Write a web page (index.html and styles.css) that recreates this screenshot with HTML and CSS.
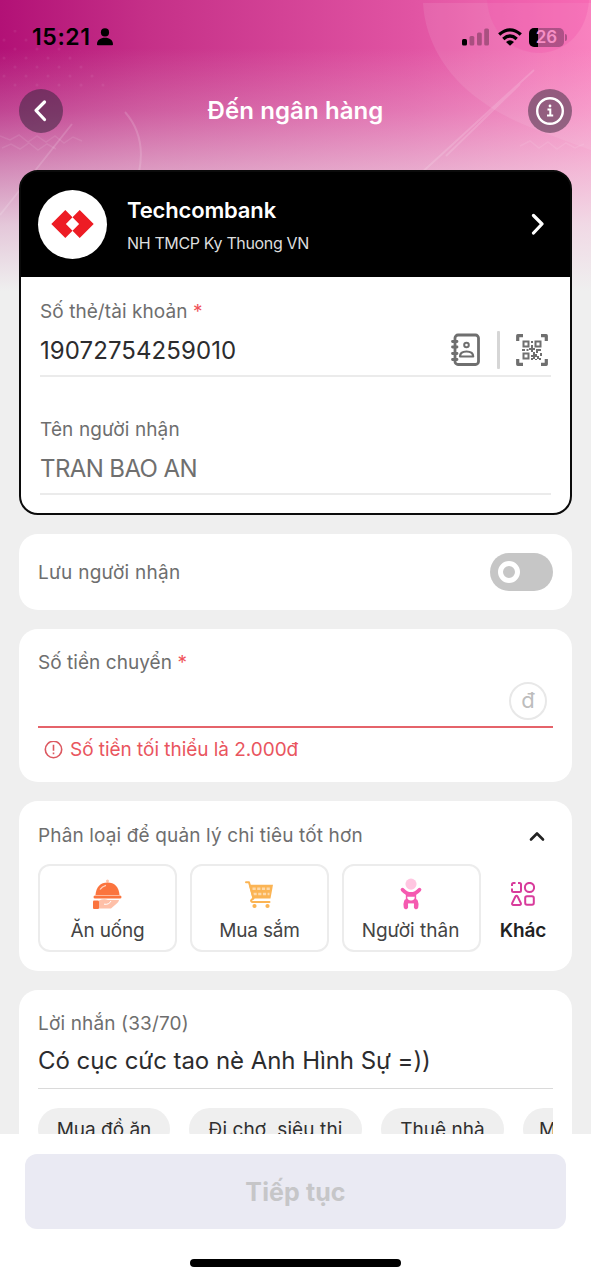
FILE: index.html
```html
<!DOCTYPE html>
<html lang="vi">
<head>
<meta charset="utf-8">
<title>Đến ngân hàng</title>
<link rel="stylesheet" href="styles.css">
</head>
<body>
<div class="screen">
  <svg class="backdrop" viewBox="0 0 591 300" aria-hidden="true">
    <defs>
      <linearGradient id="hue" x1="0" y1="0" x2="1" y2="0">
        <stop offset="0" stop-color="#b21176"/><stop offset=".25" stop-color="#c53088"/><stop offset=".7" stop-color="#e154a3"/><stop offset="1" stop-color="#f976b9"/>
      </linearGradient>
      <linearGradient id="fade" x1="0" y1="0" x2="0" y2="1">
        <stop offset=".16" stop-color="#efefef" stop-opacity="0"/><stop offset=".37" stop-color="#efefef" stop-opacity=".24"/><stop offset=".55" stop-color="#efefef" stop-opacity=".53"/><stop offset=".75" stop-color="#efefef" stop-opacity=".82"/><stop offset=".97" stop-color="#efefef"/>
      </linearGradient>
      <pattern id="dots" width="22" height="18" patternUnits="userSpaceOnUse"><circle cx="4" cy="4" r="1.500" fill="#fff"/><circle cx="15" cy="13" r="1.500" fill="#fff"/></pattern>
    </defs>
    <rect width="591" height="300" fill="url(#hue)"/>
    <path d="M423 3H591V150C550 135 505 120 480 100C445 75 425 40 423 3Z" fill="#fff" opacity=".09"/>
    <path d="M487 0H589C587 30 569 51 540 53C508 53 489 28 487 0Z" fill="#f24fa8" opacity=".28"/>
    <path d="M0 30H60L110 80V92H0Z" fill="url(#dots)" opacity=".06"/>
    <rect width="591" height="300" fill="url(#fade)"/>
    <g fill="none" stroke="#fff">
      <path d="M125 112C139 128 144 148 139 172M0 215L72 124M418 176L534 70M446 156L520 84" stroke-width="2" opacity=".15"/>
      <path d="M0 136l10 4 9-5 9 7 9-6 9 6 9-6 9 7 9-6 9 4M2 148l9-4 9 5 9-6 9 7 9-6 9 5M520 146l10-5 9 7 9-6 9 7 9-6 9 5 9-4" stroke-width="1.500" opacity=".09"/>
    </g>
  </svg>

  <header class="statusbar">
    <div class="clock"><span class="t-clock">15:21</span>
      <svg width="16" height="18" viewBox="0 0 16 18"><circle cx="8" cy="4.400" r="4.100"/><path d="M0 16.400C0 12 3.500 9.800 8 9.800s8 2.200 8 6.600q0 .8-.9.800H.9Q0 17.200 0 16.400Z"/></svg>
    </div>
    <div class="indicators">
      <svg class="signal" width="27" height="18" viewBox="0 0 27 18"><rect x="0" y="11" width="5" height="6.500" rx="1.500"/><g opacity=".28"><rect x="7.500" y="8" width="4.800" height="9.500" rx="1.500"/><rect x="15" y="4.500" width="4.800" height="13" rx="1.500"/><rect x="22.200" y=".5" width="4.800" height="17" rx="1.500"/></g></svg>
      <svg class="wifi" width="24" height="18" viewBox="0 0 24 18"><g fill="none" stroke="#000" stroke-width="3.300"><path d="M1.200 6.500Q12-2.800 22.800 6.500"/><path d="M5.300 10.900Q12 5 18.700 10.900"/></g><path d="M8 14q4-3.400 8 0L12 17.700Z"/></svg>
      <div class="battery"><span class="t-batt">26</span></div><i class="nub"></i>
    </div>
  </header>

  <nav class="topbar">
    <button class="round back"><svg width="44" height="44" viewBox="0 0 44 44"><path d="M25.500 13L17 21.500L25.500 30.500" fill="none" stroke="#fff" stroke-width="3.200" stroke-linecap="round" stroke-linejoin="round"/></svg></button>
    <h1 class="t-title">Đến ngân hàng</h1>
    <button class="round info"><svg width="44" height="44" viewBox="0 0 44 44" fill="none" stroke="#fff"><circle cx="22" cy="22" r="12.800" stroke-width="2.400"/><path d="M19.500 20.500H22.300V26.300M19 26.500H25.200" stroke-width="2"/><circle cx="22" cy="17" r="1.400" fill="#fff" stroke="none"/></svg></button>
  </nav>

  <main class="content">
    <section class="card recipient">
      <div class="bank">
        <div class="logo"><svg width="43" height="28" viewBox="0 0 43 28.400" fill="#ed1c24"><path d="M14.200 0L0 14.200L14.200 28.400L21.500 21L14.800 14.200L21.500 7.300Z"/><path d="M28.800 0L21.500 7.300L28.200 14.200L21.500 21L28.800 28.400L43 14.200Z"/></svg></div>
        <div class="bank-text"><div class="t-bank">Techcombank</div><div class="t-sub">NH TMCP Ky Thuong VN</div></div>
        <svg class="next" width="14" height="22" viewBox="0 0 14 22"><path d="M2.500 2.500L11 11L2.500 20" fill="none" stroke="#fff" stroke-width="3.200" stroke-linecap="round" stroke-linejoin="round"/></svg>
      </div>
      <div class="field account">
        <div class="label l-acc">Số thẻ/tài khoản <b class="req">*</b></div>
        <div class="row">
          <span class="value v-acc">19072754259010</span>
          <span class="tools">
            <svg width="30" height="34" viewBox="0 0 30 34" fill="none" stroke="#6f6f6f"><rect x="4" y="2" width="23.500" height="29.500" rx="3" stroke-width="2.800"/><path d="M1.500 8.500H6M1.500 14H6M1.500 20.500H6M1.500 26.500H6" stroke-width="2.800" stroke-linecap="round"/><circle cx="15.500" cy="12" r="2.300" stroke-width="2"/><path d="M9 23.500C9 19.500 12 18.500 15.500 18.500S22.200 19.500 22.200 23.500Z" stroke-width="2.200" stroke-linejoin="round"/></svg>
            <i class="divider"></i>
            <svg width="32" height="32" viewBox="0 0 32 32" fill="none" stroke="#6f6f6f"><path d="M1.700 7V1.700H7M25 1.700H30.300V7M30.300 25V30.300H25M7 30.300H1.700V25" stroke-width="3.200" stroke-linejoin="round"/><g stroke-width="2"><rect x="7.500" y="7.500" width="5" height="5"/><rect x="19.500" y="7.500" width="5" height="5"/><rect x="7.500" y="19.500" width="5" height="5"/></g><path d="M15 7h2v2h-2zM15 11h2v3h2v2h-2v2h-2v-2h-2v-2h2zM6 15h3v2H6zM10.500 15h2v2h-2zM20 15h5v2h-3v2h-2zM24 19h2v3h-2zM17 18h2v2h2v2h2v2h2v2h-2v-1h-2v-2h-2v2h-2v-2h-2v-2h2zM15 24h2v2h-2zM19 25h2v1h-2z" fill="#6f6f6f" stroke="none"/></svg>
          </span>
        </div>
      </div>
      <div class="field name">
        <div class="label l-name">Tên người nhận</div>
        <div class="row"><span class="value v-name">TRAN BAO AN</span></div>
      </div>
    </section>

    <section class="card save">
      <span class="label l-save">Lưu người nhận</span>
      <span class="toggle"><i class="knob"></i></span>
    </section>

    <section class="card amount">
      <div class="label l-amt">Số tiền chuyển <b class="req">*</b></div>
      <div class="amount-input"><span class="currency">đ</span></div>
      <div class="error"><svg width="19" height="19" viewBox="0 0 19 19" fill="none" stroke="#dc5860" stroke-width="1.600"><circle cx="9.500" cy="8.500" r="8.200"/><path d="M9.500 3.800V9.800M9.500 11.500V13.300"/></svg><span class="t-err">Số tiền tối thiểu là 2.000đ</span></div>
    </section>

    <section class="card category">
      <div class="cat-head"><span class="label l-cat">Phân loại để quản lý chi tiêu tốt hơn</span>
        <svg width="16" height="11" viewBox="0 0 16 11"><path d="M2 8.500L8 2.500L14 8.500" fill="none" stroke="#222" stroke-width="2.600" stroke-linecap="round" stroke-linejoin="round"/></svg>
      </div>
      <div class="tiles">
        <div class="tile">
          <svg width="32" height="32" viewBox="0 0 32 32"><circle cx="16.500" cy="3" r="1.500" fill="#ffc3ab"/><path d="M4.500 17C5 9 9.500 4.500 16.500 4.500S28 9 28.500 17Z" fill="#fb743e"/><path d="M9 11.500Q11 8.300 15 7.300" fill="none" stroke="#ffd2bf" stroke-width="1.300"/><rect x="2.500" y="17.500" width="28" height="3" rx="1.500" fill="#fb743e"/><path d="M8 22.500Q13 20.500 17 22H28Q28 24 24 27L20 30.500H8Z" fill="#fec0a8"/><path d="M13 26.200Q18 27 20 23" fill="none" stroke="#fff" stroke-width="1"/><rect x="2" y="22.500" width="6" height="8.500" rx="1" fill="#fb743e"/></svg>
          <span class="t-tile n1">Ăn uống</span>
        </div>
        <div class="tile">
          <svg width="32" height="32" viewBox="0 0 32 32"><path d="M6 6.800H30L27.500 20.500H9.500Z" fill="#fbb454"/><g fill="none" stroke="#fff" stroke-width="2.400" stroke-dasharray="3.200 1.500" opacity=".5"><path d="M9.500 10.800H27.500"/><path d="M10.500 16H26.500"/></g><path d="M3 4.200H6L10.500 20.500Q6.500 22.500 9 24H26.500" fill="none" stroke="#fbb454" stroke-width="2" stroke-linecap="round" stroke-linejoin="round"/><circle cx="11.500" cy="28" r="2.100" fill="#fbb454"/><circle cx="24.500" cy="28" r="2.100" fill="#fbb454"/></svg>
          <span class="t-tile n2">Mua sắm</span>
        </div>
        <div class="tile">
          <svg width="32" height="34" viewBox="0 0 32 34"><circle cx="16" cy="6.500" r="5.900" fill="#ffc6e1"/><path d="M7 12.500Q11 17 16 17T25 12.500" fill="none" stroke="#f55ab0" stroke-width="4" stroke-linecap="round"/><path d="M10.500 16H21.500V27H10.500Z" fill="#f55ab0"/><path d="M12 20H20Q20 24 16 24T12 20Z" fill="#fff"/><path d="M11 25Q9.800 28 10.600 30.800M21 25Q22.200 28 21.400 30.800" fill="none" stroke="#f55ab0" stroke-width="4.800" stroke-linecap="round"/><path d="M14 28H18V32H14Z" fill="#fff"/></svg>
          <span class="t-tile n3">Người thân</span>
        </div>
        <div class="other">
          <svg width="24" height="24" viewBox="0 0 24 24" fill="none" stroke="#d83b9b" stroke-width="2"><path d="M4.500 1H2.500Q1 1 1 2.500V4M1 6.500V8.500Q1 10 2.500 10H8.500Q10 10 10 8.500V2.500Q10 1 8.500 1H7"/><circle cx="18.500" cy="5.500" r="4.600"/><path d="M4.400 14.600Q5.500 13 6.600 14.600L9.800 21Q10.300 23 8.500 23H2.500Q.7 23 1.200 21Z"/><rect x="14.200" y="14.200" width="8.600" height="8.600" rx="1.800"/></svg>
          <span class="t-other">Khác</span>
        </div>
      </div>
    </section>

    <section class="card message">
      <div class="label l-msg">Lời nhắn (33/70)</div>
      <div class="msg-value"><span class="v-msg">Có cục cức tao nè Anh Hình Sự =))</span></div>
      <div class="chips"><span class="chip c1">Mua đồ ăn</span><span class="chip c2">Đi chợ, siêu thị</span><span class="chip c3">Thuê nhà</span><span class="chip c4">Mua sắm</span></div>
    </section>
  </main>

  <footer class="footer">
    <button class="submit"><span class="t-submit">Tiếp tục</span></button>
    <div class="homebar"></div>
  </footer>
</div>
</body>
</html>
```

FILE: styles.css
```css
* { box-sizing: border-box; }
body { margin: 0; background: #efefef; font-family: Inter, "Noto Sans", sans-serif; color: #2c2c2e; }
button { border: 0; padding: 0; font-family: inherit; }
svg { display: block; flex: none; }
.screen { position: relative; width: 591px; height: 1280px; display: flex; flex-direction: column; overflow: hidden; background: #efefef; }
.backdrop { position: absolute; left: 0; top: 0; width: 591px; height: 300px; }
.statusbar, .topbar, .content, .footer { position: relative; flex: none; }

.statusbar { height: 76px; padding: 2px 24px 4px 32px; display: flex; justify-content: space-between; align-items: center; }
.clock { display: flex; align-items: center; gap: 6px; }
.t-clock { font-size: 23px; line-height: 28px; font-weight: 600; letter-spacing: .6px; color: #000; }
.indicators { display: flex; align-items: center; }
.wifi { margin-left: 9px; }
.battery { width: 35px; height: 19px; margin-left: 7px; border-radius: 5px; background: linear-gradient(90deg, #000 9px, rgba(70, 35, 65, .4) 9px); display: flex; justify-content: center; align-items: center; }
.t-batt { font-size: 17px; line-height: 19px; font-weight: 600; color: #f58fc5; }
.nub { width: 2px; height: 7px; margin-left: 1px; border-radius: 0 2px 2px 0; background: rgba(70, 35, 65, .4); }

.topbar { height: 94px; padding: 12px 19px 0; display: flex; justify-content: space-between; align-items: flex-start; }
.round { width: 44px; height: 44px; border-radius: 50%; background: rgba(65, 38, 68, .58); margin-top: 1px; }
.info { background: rgba(90, 60, 85, .63); }
.t-title { margin: 8px 0 0; font-size: 24px; line-height: 30px; font-weight: 600; letter-spacing: .1px; color: #fff; }

.content { height: 964px; padding: 0 19px; display: flex; flex-direction: column; gap: 19px; overflow: hidden; }
.card { flex: none; background: #fff; border-radius: 19px; padding: 0 19px; }
.label { font-size: 19px; line-height: 24px; color: #6e6e6e; white-space: nowrap; }
.req { font-weight: 400; color: #f0525a; }
.value { font-size: 24px; line-height: 30px; white-space: nowrap; }

.recipient { height: 345px; padding: 0; border: 2px solid #0b0b0b; background: linear-gradient(#000 40px, #fff 40px); overflow: hidden; }
.bank { height: 106px; margin-top: -1px; padding: 0 25px 0 17px; background: #000; color: #fff; display: flex; align-items: center; }
.logo { width: 69px; height: 69px; border-radius: 50%; background: #fff; display: flex; align-items: center; justify-content: center; }
.bank-text { flex: 1; margin-left: 20px; padding-top: 2px; }
.t-bank { font-size: 22px; line-height: 28px; font-weight: 600; letter-spacing: -.15px; }
.t-sub { margin-top: 8px; font-size: 16px; line-height: 22px; letter-spacing: -.35px; color: #ddd; }
.field { margin: 0 19px; border-bottom: 2px solid #ebebeb; }
.account { height: 100px; padding-top: 23px; }
.name { height: 118px; padding-top: 41px; }
.row { display: flex; justify-content: space-between; align-items: center; height: 40px; margin-top: 7px; }
.tools { display: flex; align-items: center; margin: -2px 3px 0 0; }
.divider { width: 3px; height: 38px; margin: 0 16px; background: #d6d6d6; border-radius: 1px; }
.l-acc { letter-spacing: .07px; }
.v-acc { letter-spacing: .08px; }
.l-name { letter-spacing: .12px; }
.v-name { color: #6f6f6f; letter-spacing: -.6px; }

.save { height: 76px; display: flex; align-items: center; justify-content: space-between; }
.l-save { padding-top: 1px; letter-spacing: .27px; }
.toggle { width: 63px; height: 38px; border-radius: 19px; background: #c6c6c6; padding: 8px; }
.knob { display: block; width: 22px; height: 22px; border-radius: 50%; border: 5.500px solid #fff; }

.amount { height: 153px; padding-top: 22px; }
.l-amt { letter-spacing: .05px; }
.amount-input { height: 53px; border-bottom: 2px solid #e5636a; display: flex; justify-content: flex-end; align-items: flex-end; padding: 0 6px 6px 0; }
.currency { width: 38px; height: 38px; border: 2px solid #e8e8e8; border-radius: 50%; text-align: center; font-size: 22px; line-height: 33px; color: #bdbdbd; }
.error { display: flex; align-items: center; gap: 7px; margin: 9px 0 0 6px; height: 26px; }
.t-err { font-size: 19px; line-height: 26px; letter-spacing: -.04px; color: #e9555e; }

.category { height: 170px; padding-top: 23px; }
.l-cat { letter-spacing: .14px; }
.cat-head { display: flex; justify-content: space-between; align-items: center; padding-right: 8px; height: 24px; }
.tiles { display: flex; gap: 13px; margin-top: 16px; }
.tile { flex: none; width: 139px; height: 88px; border: 2px solid #ececec; border-radius: 12px; padding-top: 12px; display: flex; flex-direction: column; align-items: center; }
.tile svg { height: 32px; margin-left: -2px; }
.t-tile, .t-other { font-size: 19px; line-height: 24px; margin-top: 9px; color: #444; white-space: nowrap; }
.n1, .n2 { letter-spacing: -.2px; }
.n3 { margin-left: -2px; }
.other { width: 60px; margin-left: -1px; padding-top: 18px; display: flex; flex-direction: column; align-items: center; }
.t-other { margin-top: 13px; color: #222; font-weight: 600; letter-spacing: -.15px; }

.message { height: 300px; padding-top: 22px; }
.l-msg { letter-spacing: .15px; }
.msg-value { height: 53px; border-bottom: 1px solid #dadada; padding-top: 8px; }
.v-msg { display: block; font-size: 24px; line-height: 34px; letter-spacing: -.05px; white-space: nowrap; }
.chips { display: flex; gap: 19px; margin-top: 19px; overflow: hidden; }
.chip { flex: none; height: 42px; border-radius: 21px; background: #efefef; text-align: center; font-size: 19px; line-height: 43px; color: #2f2f2f; white-space: nowrap; }
.c1 { width: 132px; }
.c2 { width: 173px; letter-spacing: .1px; }
.c3 { width: 123px; }
.c4 { width: 114px; }

.footer { height: 146px; background: #fff; padding: 20px 25px 0; }
.submit { display: block; width: 541px; height: 75px; border-radius: 12px; background: #eaeaf3; }
.t-submit { font-size: 25px; line-height: 30px; font-weight: 700; letter-spacing: .1px; color: #c6c6c8; }
.homebar { width: 211px; height: 8px; border-radius: 4px; background: #000; margin: 30px auto 0; }
```
